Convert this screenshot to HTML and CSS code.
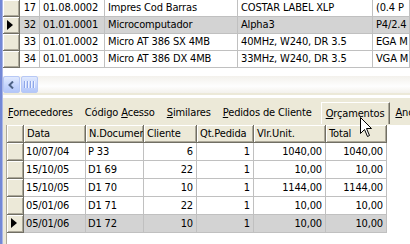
FILE: index.html
```html
<!DOCTYPE html>
<html>
<head>
<meta charset="utf-8">
<link rel="stylesheet" href="styles.css">
</head>
<body>
<div class="win">
  <div class="edge"></div>
  <div class="main">
    <div class="top">
      <table class="grid g1">
        <colgroup>
          <col class="c-ind"><col class="c-num"><col class="c-code"><col class="c-desc"><col class="c-spec"><col class="c-last">
        </colgroup>
        <tr><td class="ind"></td><td class="r">17</td><td>01.08.0002</td><td>Impres Cod Barras</td><td>COSTAR LABEL XLP</td><td>(0.4 P</td></tr>
        <tr class="sel"><td class="ind"><span class="arrow"></span></td><td class="r">32</td><td>01.01.0001</td><td>Microcomputador</td><td>Alpha3</td><td>P4/2.4</td></tr>
        <tr><td class="ind"></td><td class="r">33</td><td>01.01.0002</td><td>Micro AT 386 SX 4MB</td><td>40MHz, W240, DR 3.5</td><td>EGA M</td></tr>
        <tr><td class="ind"></td><td class="r">34</td><td>01.01.0003</td><td>Micro AT 386 DX 4MB</td><td>33MHz, W240, DR 3.5</td><td>VGA M</td></tr>
      </table>
      <div class="gridfill"></div>
      <div class="hscroll">
        <div class="sbtn">
          <svg width="7" height="8" viewBox="0 0 7 8"><path d="M5 0.5 L1.5 4 L5 7.5" fill="none" stroke="#4d6185" stroke-width="2"/></svg>
        </div>
        <div class="thumb">
          <span class="grip"></span><span class="grip"></span><span class="grip"></span><span class="grip"></span>
        </div>
      </div>
    </div>
    <div class="tabs">
      <div class="tab"><u>F</u>ornecedores</div>
      <div class="sep"></div>
      <div class="tab">Código <u>A</u>cesso</div>
      <div class="sep"></div>
      <div class="tab"><u>S</u>imilares</div>
      <div class="sep"></div>
      <div class="tab"><u>P</u>edidos de Cliente</div>
      <div class="tab active"><u>O</u>rçamentos</div>
      <div class="tab"><u>A</u>nc</div>
    </div>
    <div class="sheet">
      <table class="grid g2">
        <colgroup>
          <col class="d-ind"><col class="d-data"><col class="d-doc"><col class="d-cli"><col class="d-qt"><col class="d-vlr"><col class="d-tot"><col class="d-rest">
        </colgroup>
        <tr class="head"><td class="ind"></td><td>Data</td><td>N.Documento</td><td>Cliente</td><td>Qt.Pedida</td><td>Vlr.Unit.</td><td>Total</td><td class="rest"></td></tr>
        <tr><td class="ind"></td><td>10/07/04</td><td>P 33</td><td class="r">6</td><td class="r">1</td><td class="r">1040,00</td><td class="r">1040,00</td><td class="rest"></td></tr>
        <tr><td class="ind"></td><td>15/10/05</td><td>D1 69</td><td class="r">22</td><td class="r">1</td><td class="r">10,00</td><td class="r">10,00</td><td class="rest"></td></tr>
        <tr><td class="ind"></td><td>15/10/05</td><td>D1 70</td><td class="r">10</td><td class="r">1</td><td class="r">1144,00</td><td class="r">1144,00</td><td class="rest"></td></tr>
        <tr><td class="ind"></td><td>05/01/06</td><td>D1 71</td><td class="r">22</td><td class="r">1</td><td class="r">10,00</td><td class="r">10,00</td><td class="rest"></td></tr>
        <tr class="sel"><td class="ind"><span class="arrow"></span></td><td>05/01/06</td><td>D1 72</td><td class="r">10</td><td class="r">1</td><td class="r">10,00</td><td class="r">10,00</td><td class="rest"></td></tr>
      </table>
      <div class="sheetfill"></div>
    </div>
  </div>
  <svg class="cursor" width="13" height="21" viewBox="0 0 13 21">
    <path d="M0.5 0.5 L0.5 16.5 L4.5 12.5 L7.5 19.5 L9.5 18.5 L6.5 11.5 L11.5 11.5 Z" fill="#fff" stroke="#000" stroke-width="1" stroke-linejoin="miter"/>
  </svg>
</div>
</body>
</html>
```
FILE: styles.css
```css
html, body {
  margin: 0;
  padding: 0;
}
body {
  width: 410px;
  height: 244px;
  overflow: hidden;
  background: #ece9d8;
  font-family: "DejaVu Sans Condensed", "DejaVu Sans", "Liberation Sans", sans-serif;
  font-stretch: condensed;
  font-size: 11px;
  letter-spacing: -0.15px;
  color: #000;
}
.win {
  position: relative;
  display: flex;
  width: 410px;
  height: 244px;
  overflow: hidden;
}
.edge {
  flex: 0 0 3px;
  background: linear-gradient(to right, #7388d6 0, #7388d6 2px, #aab6e6 2px);
}
.main {
  flex: 1;
  display: flex;
  flex-direction: column;
  min-width: 0;
}
.top {
  background: #fff;
}
.grid {
  border-collapse: separate;
  border-spacing: 0;
  table-layout: fixed;
  white-space: nowrap;
}
.grid td {
  box-sizing: border-box;
  overflow: hidden;
  padding: 0 2px;
  border-right: 1px solid #c0c0c0;
  border-bottom: 1px solid #c0c0c0;
  background: #fff;
  line-height: 16px;
  height: 17px;
}
.grid td.r {
  text-align: right;
  padding-right: 3px;
}
.grid tr.sel td {
  background: #d3d3d3;
}
.grid td.ind,
.grid tr.sel td.ind {
  position: relative;
  background: #ece9d8;
  border-right: 1px solid #716f64;
  border-bottom: 1px solid #716f64;
  box-shadow: inset 1px 1px #fff, inset -1px -1px #aca899;
}
.arrow {
  position: absolute;
  left: 4px;
  top: 3px;
  width: 0;
  height: 0;
  border-left: 6px solid #000;
  border-top: 5px solid transparent;
  border-bottom: 5px solid transparent;
}
.g1 {
  width: 407px;
}
.g1 .c-ind { width: 17px; }
.g1 .c-num { width: 20px; }
.g1 .c-code { width: 65px; }
.g1 .c-desc { width: 133px; }
.g1 .c-spec { width: 135px; }
.g1 .c-last { width: 37px; }
.g1 td { padding-left: 3px; }
.g1 td.r { padding-right: 3px; }
.gridfill {
  height: 8px;
  background: #fff;
}
.hscroll {
  display: flex;
  align-items: stretch;
  height: 17px;
  background: linear-gradient(to bottom, #f3f1ec, #fefefe 60%, #f3f1ec);
}
.sbtn, .thumb {
  box-sizing: border-box;
  height: 17px;
  border: 1px solid #b7c8f5;
  border-radius: 2px;
  background: linear-gradient(to bottom, #e0e9fe, #c3d3fd 60%, #b4c7f9);
  display: flex;
  align-items: center;
  justify-content: center;
}
.sbtn {
  width: 17px;
}
.thumb {
  width: 17px;
  margin-left: 1px;
  gap: 1px;
}
.grip {
  width: 1px;
  height: 7px;
  background: #8ea6e8;
  box-shadow: 1px 0 #eef3ff;
  margin-right: 1px;
}
.tabs {
  display: flex;
  align-items: flex-end;
  height: 31px;
  padding-left: 1px;
  border-top: 2px solid #ece9d8;
  box-shadow: inset 0 3px #fff;
  box-sizing: border-box;
}
.tab {
  height: 22px;
  line-height: 22px;
  padding: 0 4px;
  white-space: nowrap;
}
.tab u {
  text-decoration: underline;
  text-underline-offset: 1px;
}
.sep {
  width: 1px;
  height: 16px;
  margin: 0 2px 3px;
  background: #aca899;
  box-shadow: 1px 0 #fff;
}
.tab.active {
  box-sizing: border-box;
  margin-left: 5px;
  padding: 0 5px 0 4px;
  line-height: 21px;
  border-top: 1px solid #fff;
  border-left: 1px solid #fff;
  border-right: 1px solid #716f64;
  box-shadow: inset -1px 0 #aca899;
}
.tab.active + .tab {
  margin-left: 1px;
}
.sheet {
  flex: 1;
  margin-left: 3px;
  margin-top: 1px;
  background: #fff;
  display: flex;
  flex-direction: column;
  border-left: 1px solid #aca899;
}
.g2 {
  width: 403px;
}
.g2 .d-ind { width: 17px; }
.g2 .d-data { width: 62px; }
.g2 .d-doc { width: 58px; }
.g2 .d-cli { width: 53px; }
.g2 .d-qt { width: 57px; }
.g2 .d-vlr { width: 72px; }
.g2 .d-tot { width: 61px; }
.g2 .d-rest { width: 23px; }
.g2 td {
  height: 18px;
  line-height: 17px;
}
.g2 tr.head td {
  background: #ece9d8;
  border-right: 1px solid #716f64;
  border-bottom: 1px solid #716f64;
  box-shadow: inset 1px 1px #fff, inset -1px -1px #aca899;
  padding-left: 3px;
  text-overflow: clip;
}
.g2 td.rest,
.g2 tr.head td.rest,
.g2 tr.sel td.rest {
  background: #fff;
  border: 0;
  box-shadow: none;
}
.sheetfill {
  flex: 1;
  background: #fff;
}
.cursor {
  position: absolute;
  left: 360px;
  top: 117px;
}
```
